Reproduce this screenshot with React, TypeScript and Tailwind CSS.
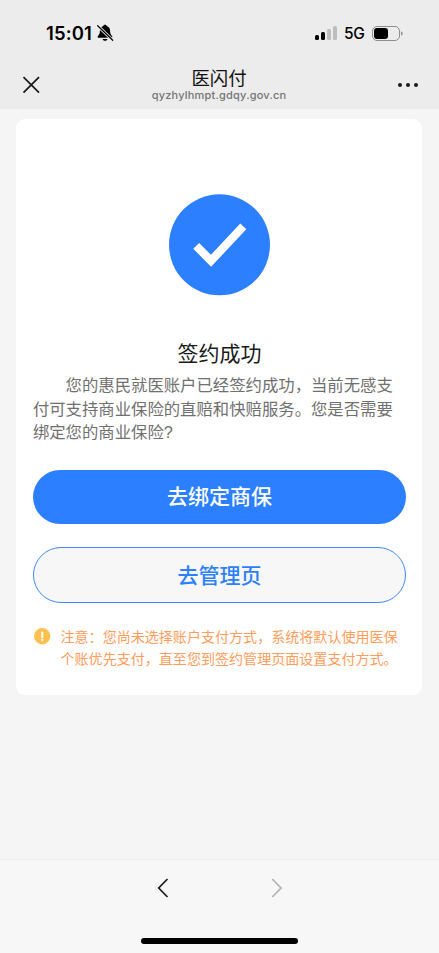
import React from "react";

const bars = [
  { id: 1, className: "h-[5px] bg-black" },
  { id: 2, className: "h-[8px] bg-black" },
  { id: 3, className: "h-[11px] bg-[#bdbdbd]" },
  { id: 4, className: "h-[14px] bg-[#bdbdbd]" },
];

const StatusBar = () => (
  <div className="flex h-[60px] items-start justify-between pl-[46px] pr-[36px] pt-[22px] text-black">
    <div className="flex h-[22px] items-center">
      <span className="w-[50px] whitespace-nowrap pt-[1px] font-['Inter',sans-serif] text-[18.500px] font-semibold tracking-[0.1px]">15:01</span>
      <svg width="18" height="18" viewBox="0 0 18 18" className="shrink-0">
        <path
          d="M9 .7c-.9 0-1.600.5-1.700 1.300C5 2.700 4 4.500 3.900 7 3.800 9.800 3.200 10.800 2 12c-.7.8-.3 1.800.7 1.800h12.600c1 0 1.400-1 .7-1.800-1.200-1.200-1.800-2.200-1.900-5-.1-2.500-1.100-4.300-3.400-5C10.600 1.200 9.900.7 9 .7z"
          fill="#000"
        />
        <path d="M6.500 14.900h5c-.2 1.100-1.200 1.900-2.500 1.900s-2.300-.8-2.500-1.900z" fill="#000" />
        <path d="M1.600 1.600l15 14.600" stroke="#ececec" strokeWidth="3" />
        <path d="M1.700 1.700l15 14.600" stroke="#000" strokeWidth="1.200" strokeLinecap="round" />
      </svg>
    </div>
    <div className="flex h-[22px] items-center">
      <div className="flex h-[14px] items-end gap-[2px]">
        {bars.map((bar) => (
          <div key={bar.id} className={`w-[4px] rounded-[1.5px] ${bar.className}`} />
        ))}
      </div>
      <span className="ml-[7px] w-[21px] whitespace-nowrap pt-[1px] font-['Inter',sans-serif] text-[15.500px] font-medium tracking-[-0.4px]">5G</span>
      <svg width="31" height="15" viewBox="0 0 31 15" className="ml-[7px] shrink-0">
        <rect x="0.500" y="0.500" width="27" height="14" rx="4.500" fill="none" stroke="#8e8e8e" />
        <rect x="2" y="2" width="14" height="11" rx="3" fill="#000" />
        <path d="M29 5.300c1.200.5 1.600 1.200 1.600 2.200s-.4 1.700-1.600 2.200z" fill="#8e8e8e" />
      </svg>
    </div>
  </div>
);

const NavBar = () => (
  <div className="flex h-[49px] items-start justify-between pl-[22px] pr-[21px]">
    <svg width="18" height="18" viewBox="0 0 18 18" className="mt-[16px]">
      <path d="M1.500 1.200l15.500 15.500M17 1.200L1.500 16.700" stroke="#1a1a1a" strokeWidth="1.700" fill="none" />
    </svg>
    <div className="flex flex-col items-center pt-[7px]">
      <h1 className="text-[18.400px] font-normal leading-[24px] text-[#111]">医闪付</h1>
      <p className="-mt-[1px] whitespace-nowrap font-['Inter',sans-serif] text-[11px] font-medium leading-[10px] tracking-[0.2px] text-[#757575]">
        qyzhylhmpt.gdqy.gov.cn
      </p>
    </div>
    <div className="mt-[23px] flex gap-[4px]">
      <div className="h-[4px] w-[4px] rounded-full bg-[#1a1a1a]" />
      <div className="h-[4px] w-[4px] rounded-full bg-[#1a1a1a]" />
      <div className="h-[4px] w-[4px] rounded-full bg-[#1a1a1a]" />
    </div>
  </div>
);

const ResultCard = () => (
  <div className="ml-[16.400px] mr-[16.600px] mt-[10px] flex h-[576px] flex-col rounded-[9px] bg-white px-[16.500px] pt-[75px]">
    <svg width="104" height="102" viewBox="0 0 104 102" className="self-center">
      <circle cx="52.500" cy="50.800" r="50.500" fill="#2c7fff" />
      <path d="M29.200 51.800L44 66.800L76.300 32.300" fill="none" stroke="#fff" strokeWidth="8.300" />
    </svg>

    <h2 className="mt-[43px] text-center text-[21px] leading-[30px] text-[#1a1a1a]">签约成功</h2>
    <p className="mt-[5px] whitespace-nowrap indent-[2em] text-[16.360px] leading-[23.600px] text-[#707070]">
      您的惠民就医账户已经签约成功，当前无感支
      <br />
      付可支持商业保险的直赔和快赔服务。您是否需要
      <br />
      绑定您的商业保险?
    </p>

    {/* actions */}
    <button className="mt-[25px] h-[54px] w-full shrink-0 rounded-full bg-[#2c7fff] text-[21px] font-medium text-white">
      去绑定商保
    </button>
    <button className="mt-[23.500px] h-[56px] w-full shrink-0 rounded-full border-[1.500px] border-[#4087f5] bg-[#f7f7f7] text-[21px] font-medium text-[#2c7fff]">
      去管理页
    </button>

    {/* notice */}
    <div className="mt-[24px] flex">
      <svg width="18" height="17" viewBox="0 0 18 17" className="mt-[1px] shrink-0">
        <circle cx="9.200" cy="8.200" r="8.200" fill="#fec150" />
        <path d="M9.200 4.500v4.600" stroke="#fff" strokeWidth="2.200" strokeLinecap="round" />
        <circle cx="9.200" cy="12" r="1.200" fill="#fff" />
      </svg>
      <p className="ml-[9.600px] whitespace-nowrap text-[14.050px] leading-[21.500px] text-[#ff9d5c]">
        注意：您尚未选择账户支付方式，系统将默认使用医保
        <br />
        个账优先支付，直至您到签约管理页面设置支付方式。
      </p>
    </div>
  </div>
);

const BottomBar = () => (
  <div className="mt-auto flex h-[94px] flex-col items-center border-t border-[#ededed] bg-[#f7f7f7]">
    <div className="flex w-[126px] justify-between pt-[18px]">
      <svg width="12" height="20" viewBox="0 0 12 20">
        <path d="M10.500 1L1.700 10L10.500 19" fill="none" stroke="#1a1a1a" strokeWidth="1.700" />
      </svg>
      <svg width="12" height="20" viewBox="0 0 12 20">
        <path d="M1.200 1L10 10L1.200 19" fill="none" stroke="#b2b2b2" strokeWidth="1.700" />
      </svg>
    </div>
    <div className="mt-[40px] h-[6px] w-[157px] rounded-full bg-black" />
  </div>
);

const App = () => {
  return (
    <div className="flex h-[953px] w-full flex-col overflow-hidden bg-[#f5f5f5] font-['Liberation_Sans','Noto_Sans_CJK_SC',sans-serif]" lang="zh-CN">
      <div className="bg-[#ececec]">
        <StatusBar />
        <NavBar />
      </div>
      <ResultCard />
      <BottomBar />
    </div>
  );
};

export default App;
